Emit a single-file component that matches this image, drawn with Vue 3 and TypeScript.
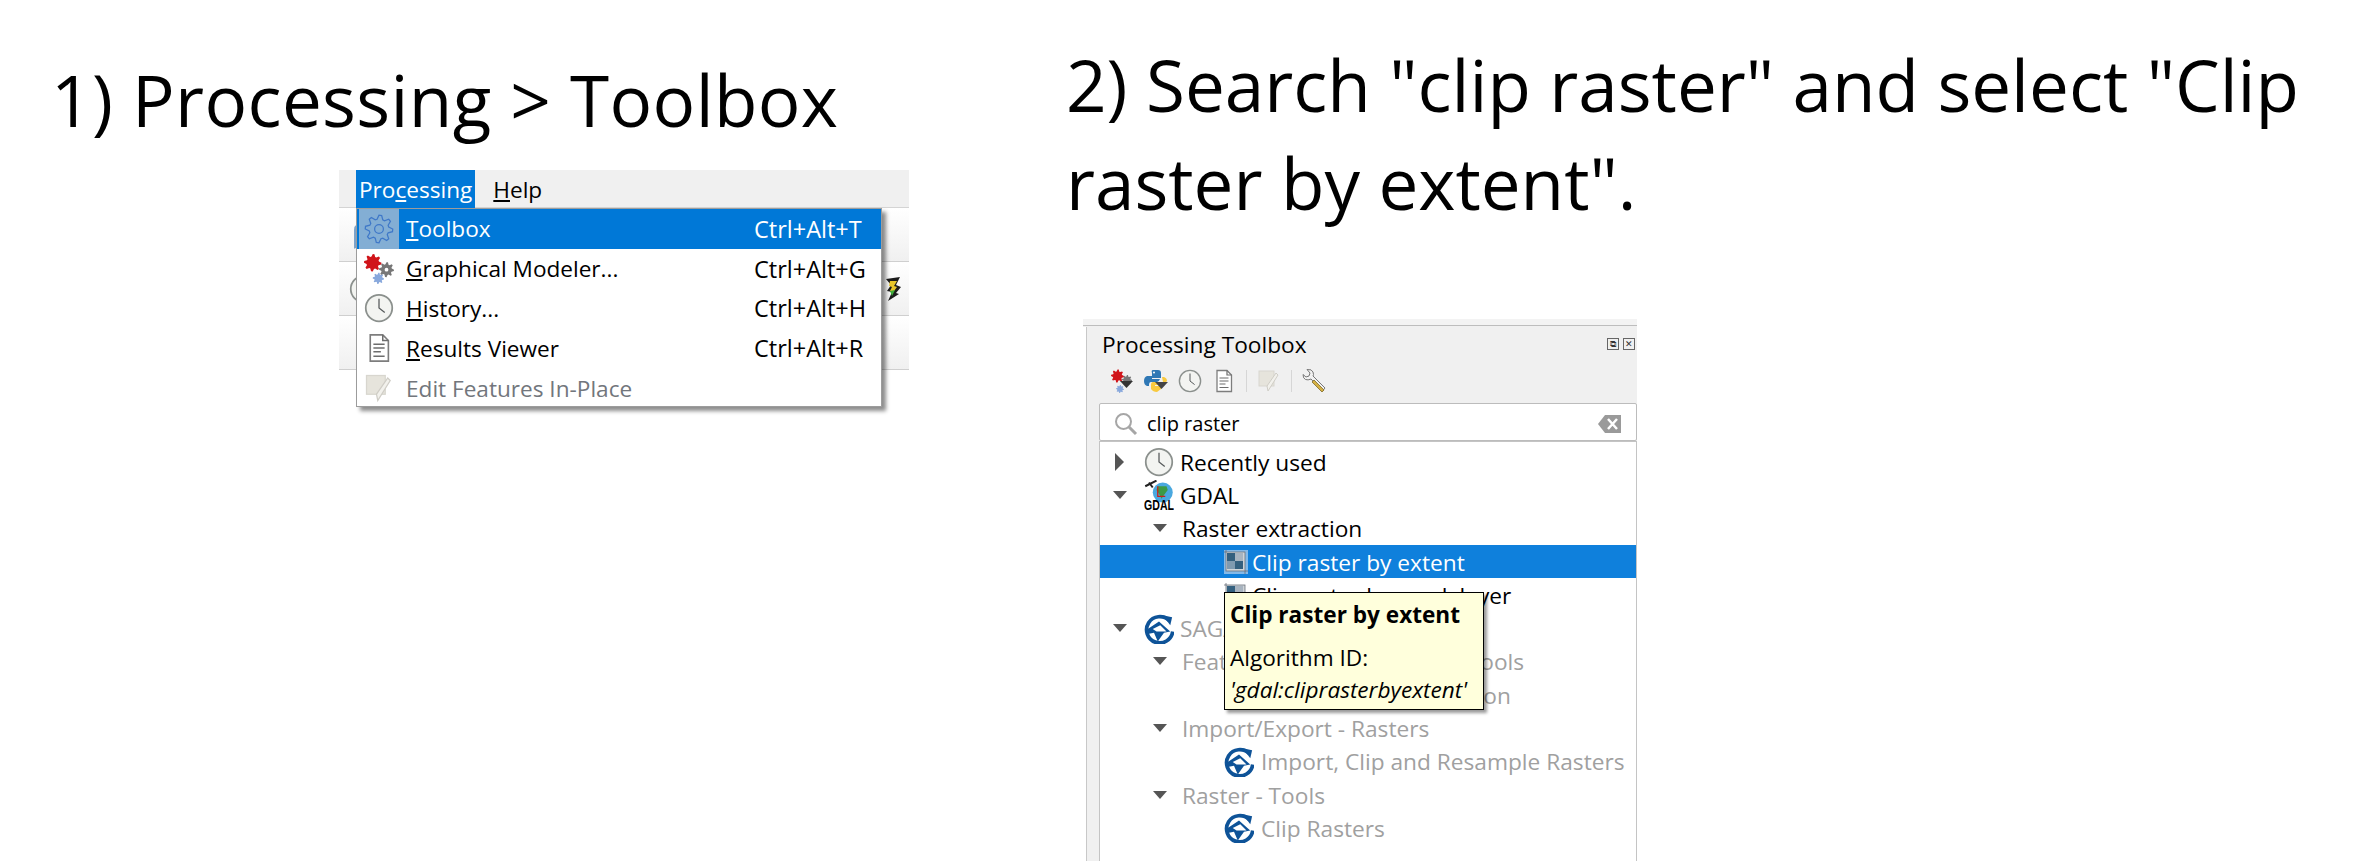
<template>
  <div class="page">
    <svg class="defs" width="0" height="0" aria-hidden="true">
      <defs>
        <symbol id="i-clock" viewBox="0 0 24 24">
          <circle cx="12" cy="12" r="10.6" fill="#f3f4f1" stroke="#8b908d" stroke-width="1.4" />
          <path d="M12 4.5V12l4.6 3.6" fill="none" stroke="#55595a" stroke-width="1" />
        </symbol>
        <symbol id="i-doc" viewBox="0 0 24 24">
          <path d="M5 1.500h10l4.500 4.500v16.500H5z" fill="#fff" stroke="#7d7d7d" stroke-width="1.300" />
          <path d="M15 1.500V6h4.500M7.500 9h9M7.500 12h9M7.500 15h6M7.500 18.500h9" fill="none" stroke="#6d6d6d" stroke-width="1.200" />
        </symbol>
        <symbol id="i-edit" viewBox="0 0 24 24">
          <rect x="2" y="2" width="15" height="15" fill="#e6e4dc" stroke="#d8d6cf" />
          <path d="M21 6 11 22l-1-5L19 4z" fill="#f2f1ec" stroke="#cfcdc6" />
        </symbol>
        <symbol id="i-model" viewBox="0 0 24 24">
          <path :d="gearPath(7, 7, 7, 8)" fill="#d0141a" />
          <path :d="gearPath(18, 12.500, 6, 8)" fill="#777" />
          <circle cx="18" cy="12.500" r="1.500" fill="#fff" />
          <path :d="gearPath(11.500, 19.500, 4.500, 8)" fill="#88a8dc" />
        </symbol>
        <symbol id="i-model-tb" viewBox="0 0 24 24">
          <path :d="gearPath(7.500, 7, 6.500, 8)" fill="#d0141a" />
          <path :d="gearPath(17, 11, 5, 8)" fill="#777" />
          <path d="M10 12h13l-6.500 7z" fill="#333" />
          <path :d="gearPath(10, 20, 4, 8)" fill="#88a8dc" />
        </symbol>
        <symbol id="i-python" viewBox="0 0 24 24">
          <path d="M9 1h5q3 0 3 3v5H8v1h8q-1 3-3 3H7q-2 0-2 3v1H3q-3-1-3-5t3-5h5V4Q7 1 9 1z" fill="#2f78b5" />
          <circle cx="10" cy="3.500" r="1" fill="#fff" />
          <path d="M18 8h2q3 1 3 4l-1 1H9q-2 0-2 3v4q2 3 6 3l4-3v-3h-6v-1h7q1-1 1-3z" fill="#f8c93e" />
          <path d="M11 13h13l-6.500 7z" fill="#444" />
        </symbol>
        <symbol id="i-wrench" viewBox="0 0 24 24">
          <path d="M1 5.500 4 8l3-1 1-3-3-3.500q5-.5 6 2.500t0 4l12 12-2.500 3L9 10q-3 1.500-5.500.5T1 5.500z" fill="#f2f2f2" stroke="#777" stroke-width="1" />
          <path d="m12 11 10 10-2 2L10 13z" fill="#d4b044" stroke="#7d6a2a" stroke-width=".8" />
        </symbol>
        <symbol id="i-search" viewBox="0 0 24 24">
          <circle cx="9.500" cy="9.500" r="7.500" fill="#fff" stroke="#a6a6a6" stroke-width="2" />
          <path d="m15 15 7 7" stroke="#a6a6a6" stroke-width="3" />
        </symbol>
        <symbol id="i-clear" viewBox="0 0 24 24">
          <path d="M7 3h16v18H7L0 12z" fill="#9a9a9a" />
          <path d="m10 7 9 10m0-10-9 10" stroke="#fff" stroke-width="2.500" />
        </symbol>
        <symbol id="i-clip" viewBox="0 0 24 24">
          <rect x="2" y="2" width="19" height="19" fill="#cfd4d8" stroke="#69707a" stroke-width=".8" />
          <path d="M2 0v2H0M21 24v-3h3" fill="none" stroke="#69707a" stroke-width=".8" />
          <rect x="3" y="3" width="8" height="8" fill="#34607f" />
          <rect x="11" y="11" width="8" height="8" fill="#34607f" />
          <rect x="11" y="3" width="8" height="8" fill="#a8b4c0" />
          <rect x="3" y="11" width="8" height="8" fill="#7f9ab0" />
        </symbol>
        <symbol id="i-saga" viewBox="0 0 24 24">
          <path d="M20 5.200A10.500 10.500 0 1 0 23 14" fill="none" stroke="#0e5398" stroke-width="3" />
          <path d="m15 1 7.500 1.500-1.500 6.500z" fill="#0e5398" />
          <path d="M3 12 12 6l9 8-5 1-5 7-3-7-5 1z" fill="#0e5398" />
          <path d="m7 12 6-3 5 5H10z" fill="#fff" />
        </symbol>
        <symbol id="i-ribbon" viewBox="0 0 24 24">
          <path d="M4 23V8q0-6 8-6h8v15l-4 2v-12h-4q-3 0-3 3v11z" fill="#7ea3c9" />
        </symbol>
        <symbol id="i-gdal" viewBox="0 0 24 24">
          <circle cx="15" cy="10" r="8" fill="#4aa8df" />
          <path d="M11 5h7l1 3-3 4-2 3-2-4-2-3z" fill="#3c9a45" />
          <path d="M11 5v8h6" fill="none" stroke="#c8201c" stroke-width="1" />
          <path d="m1 5 9-4.500M4 2l3 4" stroke="#222" stroke-width="1.600" />
          <text x="0" y="24" class="gdal-text" textLength="24" lengthAdjust="spacingAndGlyphs">GDAL</text>
        </symbol>
      </defs>
    </svg>

    <section class="step step-one">
      <h1 class="heading">1) Processing &gt; Toolbox</h1>

      <div class="shot">
        <div class="menubar">
          <span class="menubar-item active">Pro<u>c</u>essing</span>
          <span class="menubar-item"><u>H</u>elp</span>
        </div>
        <div class="toolbar-row">
          <svg class="behind"><use href="#i-ribbon" /></svg>
        </div>
        <div class="toolbar-row">
          <svg class="behind"><use href="#i-clock" /></svg>
          <svg class="rainbow" viewBox="0 0 18 26">
            <path d="M2 3 16 1l-4 8 5 2-5 6 3 1-11 7 4-9-5-1 4-6z" fill="#1c1c1c" />
            <path d="M6 5h7l-3 5 3 1-3 4H6l2-4-3-1z" fill="#e8c62c" />
            <path d="m6 15 5-1-3 6z" fill="#3fae3a" />
          </svg>
        </div>
        <div class="toolbar-row"></div>

        <div class="menu">
          <div
            v-for="item in menuItems"
            :key="item.rest"
            class="menu-row"
            :class="{ current: item.current, disabled: item.disabled }"
          >
            <span class="menu-icon">
              <svg v-if="item.current" class="gear-current" viewBox="0 0 24 24">
                <path :d="gearPath(12, 12, 11, 8)" fill="none" stroke="#3f78c8" stroke-width="1" />
                <circle cx="12" cy="12" r="3.500" fill="none" stroke="#3f78c8" stroke-width="1" />
              </svg>
              <svg v-else class="menu-svg"><use :href="item.icon" /></svg>
            </span>
            <span class="menu-label"><u v-if="item.key">{{ item.key }}</u>{{ item.rest }}</span>
            <span class="menu-shortcut">{{ item.shortcut }}</span>
          </div>
        </div>
      </div>
    </section>

    <section class="step step-two">
      <h1 class="heading">2) Search "clip raster" and select "Clip raster by extent".</h1>

      <div class="toolbox">
        <div class="toolbox-title">
          <span>Processing Toolbox</span>
          <span class="win-buttons">
            <i class="win-btn">⧉</i>
            <i class="win-btn">✕</i>
          </span>
        </div>

        <div class="toolbox-tools">
          <svg class="tool"><use href="#i-model-tb" /></svg>
          <svg class="tool"><use href="#i-python" /></svg>
          <svg class="tool"><use href="#i-clock" /></svg>
          <svg class="tool"><use href="#i-doc" /></svg>
          <span class="sep"></span>
          <svg class="tool"><use href="#i-edit" /></svg>
          <span class="sep"></span>
          <svg class="tool"><use href="#i-wrench" /></svg>
        </div>

        <div class="search">
          <svg class="search-icon"><use href="#i-search" /></svg>
          <span class="search-text">clip raster</span>
          <svg class="clear-icon"><use href="#i-clear" /></svg>
        </div>

        <div class="tree">
          <div
            v-for="row in rows"
            :key="row.label"
            class="tree-row"
            :class="['depth-' + row.depth, { muted: row.muted, selected: row.selected }]"
          >
            <span v-if="row.arrow" class="arrow" :class="row.arrow"></span>
            <svg v-if="row.icon" class="tree-icon" :class="{ wide: row.icon === '#i-saga' }"><use :href="row.icon" /></svg>
            <span class="tree-label">{{ row.label }}</span>
          </div>
        </div>

        <div class="tooltip">
          <strong>Clip raster by extent</strong>
          <p>Algorithm ID:</p>
          <em>'gdal:cliprasterbyextent'</em>
        </div>
      </div>
    </section>
  </div>
</template>

<script setup lang="ts">
interface MenuItem {
  key: string
  rest: string
  shortcut: string
  icon: string
  current?: boolean
  disabled?: boolean
}

interface TreeRow {
  label: string
  depth: number
  arrow?: 'right' | 'down'
  icon?: string
  muted?: boolean
  selected?: boolean
}

const menuItems: MenuItem[] = [
  { key: 'T', rest: 'oolbox', shortcut: 'Ctrl+Alt+T', icon: '', current: true },
  { key: 'G', rest: 'raphical Modeler...', shortcut: 'Ctrl+Alt+G', icon: '#i-model' },
  { key: 'H', rest: 'istory...', shortcut: 'Ctrl+Alt+H', icon: '#i-clock' },
  { key: 'R', rest: 'esults Viewer', shortcut: 'Ctrl+Alt+R', icon: '#i-doc' },
  { key: '', rest: 'Edit Features In-Place', shortcut: '', icon: '#i-edit', disabled: true },
]

const rows: TreeRow[] = [
  { label: 'Recently used', depth: 0, arrow: 'right', icon: '#i-clock' },
  { label: 'GDAL', depth: 0, arrow: 'down', icon: '#i-gdal' },
  { label: 'Raster extraction', depth: 1, arrow: 'down' },
  { label: 'Clip raster by extent', depth: 2, icon: '#i-clip', selected: true },
  { label: 'Clip raster by mask layer', depth: 2, icon: '#i-clip' },
  { label: 'SAGA', depth: 0, arrow: 'down', icon: '#i-saga', muted: true },
  { label: 'Features - Polygon - Shape Tools', depth: 1, arrow: 'down', muted: true },
  { label: 'Clip raster with polygon', depth: 2, icon: '#i-saga', muted: true },
  { label: 'Import/Export - Rasters', depth: 1, arrow: 'down', muted: true },
  { label: 'Import, Clip and Resample Rasters', depth: 2, icon: '#i-saga', muted: true },
  { label: 'Raster - Tools', depth: 1, arrow: 'down', muted: true },
  { label: 'Clip Rasters', depth: 2, icon: '#i-saga', muted: true },
]

// toothed outline for the cog icons
function gearPath(cx: number, cy: number, r: number, teeth: number): string {
  const pts: string[] = []
  const step = (Math.PI * 2) / (teeth * 4)
  for (let i = 0; i < teeth * 4; i++) {
    const radius = i % 4 < 2 ? r : r * 0.72
    const a = i * step
    pts.push(`${(cx + radius * Math.cos(a)).toFixed(2)} ${(cy + radius * Math.sin(a)).toFixed(2)}`)
  }
  return 'M' + pts.join('L') + 'Z'
}
</script>

<style>
html,
body {
  background: #fff;
  overflow: hidden;
}
</style>

<style scoped>
.page {
  display: flex;
  width: 2364px;
  height: 862px;
  overflow: hidden;
  background: #fff;
  color: #000;
  font-family: 'Open Sans', 'Noto Sans', sans-serif;
}

.defs {
  position: absolute;
}

.heading {
  margin: 0;
  font-size: 71px;
  font-weight: 400;
  line-height: 98px;
}

.step-one {
  width: 1066px;
  flex: none;
  padding: 51px 0 0 51px;
  box-sizing: border-box;
}

.step-one .heading {
  letter-spacing: 0.35px;
}

.step-two {
  flex: 1;
  padding-top: 36px;
}

/* left screenshot */
.shot {
  position: relative;
  width: 570px;
  margin: 21px 0 0 288px;
  background: #f0f0f0;
  font-size: 22.600px;
}

.menubar {
  display: flex;
  align-items: center;
  height: 38px;
  padding-left: 17px;
  gap: 15px;
  border-bottom: 1px solid #d4d4d4;
  box-sizing: border-box;
}

.menubar-item {
  height: 38px;
  line-height: 40px;
  padding: 0 3px;
}

.menubar-item.active {
  background: #0078d7;
  color: #fff;
}

.toolbar-row {
  display: flex;
  align-items: center;
  justify-content: space-between;
  height: 54px;
  padding: 0 7px 0 10px;
  border-bottom: 1px solid #cfcfcf;
  box-sizing: border-box;
  background: linear-gradient(#fff, #f0f0f0);
}

.behind {
  width: 30px;
  height: 30px;
}

.rainbow {
  width: 18px;
  height: 26px;
}

.menu {
  position: absolute;
  top: 38px;
  left: 17px;
  width: 526px;
  height: 199px;
  box-sizing: border-box;
  background: #fff;
  border: 1px solid #9c9c9c;
  box-shadow: 4px 4px 4px rgba(0, 0, 0, 0.45);
}

.menu-row {
  display: flex;
  align-items: center;
  height: 39.800px;
}

.menu-row.current {
  background: #0078d7;
  color: #fff;
}

.menu-row.disabled {
  color: #72767c;
}

.menu-icon {
  display: flex;
  align-items: center;
  justify-content: center;
  width: 40px;
  height: 100%;
  margin: 0 7px 0 2px;
  flex: none;
}

.current .menu-icon {
  background: #83aed4;
}

.menu-svg,
.gear-current {
  width: 30px;
  height: 30px;
}

.menu-label {
  flex: 1;
}

.menu-shortcut {
  width: 127px;
  font-size: 23.500px;
  white-space: nowrap;
}

/* right screenshot */
.toolbox {
  position: relative;
  width: 554px;
  height: 542px;
  margin: 87px 0 0 17px;
  padding-left: 16px;
  box-sizing: border-box;
  background: #f0f0f0;
  border-top: 7px solid #f3f3f3;
  font-size: 22.700px;
}

.toolbox::before {
  content: '';
  position: absolute;
  top: -1px;
  left: 0;
  right: 0;
  height: 1px;
  background: #bdbdbd;
}

.toolbox::after {
  content: '';
  position: absolute;
  top: 1px;
  bottom: 0;
  left: 0;
  width: 3px;
  background: #fff;
  border-right: 1px solid #c8c8c8;
}

.toolbox-title {
  display: flex;
  align-items: center;
  justify-content: space-between;
  height: 36px;
  padding: 0 2px 0 3px;
}

.win-buttons {
  display: flex;
  gap: 4px;
}

.win-btn {
  display: block;
  width: 12px;
  height: 12px;
  border: 1px solid #666;
  box-sizing: border-box;
  font-size: 9px;
  font-style: normal;
  line-height: 10px;
  text-align: center;
  color: #333;
}

.toolbox-tools {
  display: flex;
  align-items: center;
  gap: 10px;
  height: 38px;
  padding-left: 11px;
  margin-bottom: 3px;
}

.tool {
  width: 24px;
  height: 24px;
}

.sep {
  width: 1px;
  height: 22px;
  background: #d6d6d6;
}

.search {
  display: flex;
  align-items: center;
  height: 38px;
  padding: 3px 12px 0 14px;
  background: #fff;
  border: 1px solid #bcbcbc;
  border-radius: 2px;
  box-sizing: border-box;
}

.search-icon {
  width: 24px;
  height: 24px;
  margin-right: 9px;
}

.search-text {
  flex: 1;
  font-size: 20px;
}

.clear-icon {
  width: 28px;
  height: 24px;
}

.tree {
  height: 420px;
  background: #fff;
  border: 1px solid #c4c4c4;
  border-width: 1px 1px 0;
  padding-top: 3px;
  box-sizing: border-box;
}

.tree-row {
  position: relative;
  display: flex;
  align-items: center;
  height: 33.300px;
  padding-top: 1px;
  box-sizing: border-box;
  white-space: nowrap;
}

.tree-row.muted {
  color: #a0a0a0;
}

.tree-row.selected {
  background: #0f80dc;
  color: #fff;
}

.selected .tree-icon {
  background: #83b9e8;
}

.depth-0 {
  padding-left: 44px;
}

.depth-1 {
  padding-left: 82px;
}

.depth-2 {
  padding-left: 124px;
}

.arrow {
  position: absolute;
  top: 50%;
}

.arrow.down {
  margin-top: -4px;
  border-left: 7px solid transparent;
  border-right: 7px solid transparent;
  border-top: 8px solid #555;
}

.arrow.right {
  margin-top: -9px;
  left: 15px;
  border-top: 9px solid transparent;
  border-bottom: 9px solid transparent;
  border-left: 9px solid #555;
}

.depth-0 .arrow.down {
  left: 13px;
}

.depth-1 .arrow.down {
  left: 53px;
}

.tree-icon {
  width: 30px;
  height: 30px;
  margin-right: 6px;
  flex: none;
}

.depth-2 .tree-icon {
  width: 24px;
  height: 24px;
  margin-right: 4px;
}

.depth-2 .tree-icon.wide {
  width: 30px;
  height: 30px;
  margin-right: 7px;
}

.tooltip {
  position: absolute;
  top: 266px;
  left: 141px;
  width: 260px;
  height: 118px;
  padding: 8px 5px 0;
  box-sizing: border-box;
  background: #ffffdc;
  border: 1px solid #000;
  box-shadow: 3px 3px 3px rgba(0, 0, 0, 0.4);
  font-size: 22.600px;
  line-height: 28px;
}

.tooltip strong,
.tooltip em {
  display: block;
  white-space: nowrap;
}

.tooltip p {
  margin: 15px 0 0;
}

.tooltip em {
  margin-top: 4px;
}

.gdal-text {
  font-family: 'Liberation Sans', sans-serif;
  font-size: 11px;
  font-weight: 700;
  fill: #000;
}
</style>
